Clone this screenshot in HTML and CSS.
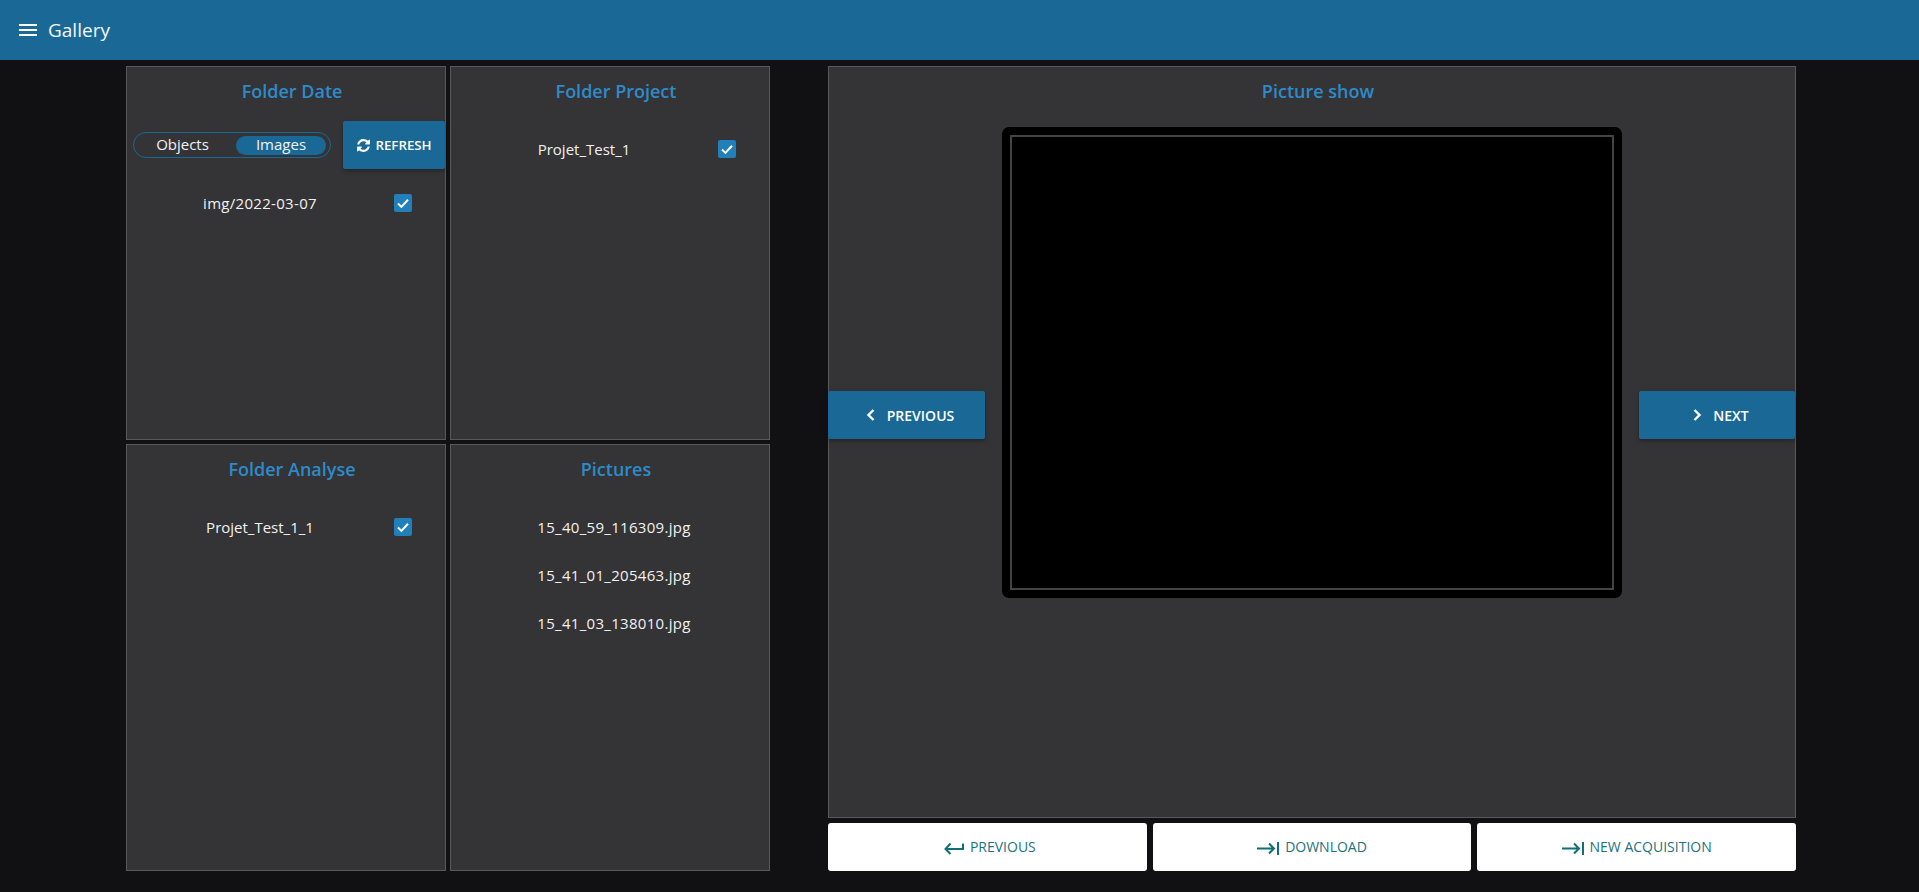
FILE: index.html
```html
<!DOCTYPE html>
<html>
	<head>
		<meta charset="utf-8">
		<title>Gallery</title>
		<link rel="stylesheet" href="styles.css">
	</head>
	<body>
		<div class="topbar">
			<svg class="menu-icon" viewBox="0 0 24 24"><path d="M3 18h18v-2H3v2zm0-5h18v-2H3v2zm0-7v2h18V6H3z"/></svg>
			<span class="topbar-title">Gallery</span>
		</div>
		<div class="main">
			<div class="folders">
				<div class="panel">
					<div class="panel-title">Folder Date</div>
					<div class="toolbar">
						<div class="switch">
							<span class="switch-off">Objects</span>
							<span class="switch-on">Images</span>
						</div>
						<div class="btn refresh">
							<svg class="refresh-icon" viewBox="0 0 1792 1792"><path d="M1639 1056q0 5-1 7-64 268-268 434.5t-478 166.5q-146 0-282.5-55t-243.5-157l-129 129q-19 19-45 19t-45-19-19-45v-448q0-26 19-45t45-19h448q26 0 45 19t19 45-19 45l-137 137q71 66 161 102t187 36q134 0 250-65t186-179q11-17 53-117 8-23 30-23h192q13 0 22.5 9.5t9.5 22.5zm25-800v448q0 26-19 45t-45 19h-448q-26 0-45-19t-19-45 19-45l138-138q-148-137-349-137-134 0-250 65t-186 179q-11 17-53 117-8 23-30 23h-199q-13 0-22.5-9.5t-9.5-22.5v-7q65-268 270-434.5t480-166.5q146 0 284 55.5t245 156.5l130-129q19-19 45-19t45 19 19 45z"/></svg>
							REFRESH
						</div>
					</div>
					<div class="row">
						<span class="row-label spaced">img/2022-03-07</span>
						<span class="check"><svg viewBox="0 0 18 18"><path d="M4 9.5l3.4 3.4L14 5.8"/></svg></span>
					</div>
				</div>
				<div class="panel">
					<div class="panel-title">Folder Project</div>
					<div class="row">
						<span class="row-label">Projet_Test_1</span>
						<span class="check"><svg viewBox="0 0 18 18"><path d="M4 9.5l3.4 3.4L14 5.8"/></svg></span>
					</div>
				</div>
				<div class="panel">
					<div class="panel-title">Folder Analyse</div>
					<div class="row">
						<span class="row-label">Projet_Test_1_1</span>
						<span class="check"><svg viewBox="0 0 18 18"><path d="M4 9.5l3.4 3.4L14 5.8"/></svg></span>
					</div>
				</div>
				<div class="panel">
					<div class="panel-title">Pictures</div>
					<div class="row row-file spaced">15_40_59_116309.jpg</div>
					<div class="row row-file spaced">15_41_01_205463.jpg</div>
					<div class="row row-file spaced">15_41_03_138010.jpg</div>
				</div>
			</div>
			<div class="viewer">
				<div class="panel show">
					<div class="panel-title">Picture show</div>
					<div class="stage">
						<div class="btn side prev">
							<svg class="chevron" viewBox="0 0 12 16"><path d="M8.5 3L3.5 8l5 5"/></svg>
							PREVIOUS
						</div>
						<div class="picture"><div class="picture-inner"></div></div>
						<div class="btn side next">
							<svg class="chevron" viewBox="0 0 12 16"><path d="M3.5 3l5 5-5 5"/></svg>
							NEXT
						</div>
					</div>
				</div>
				<div class="actions">
					<div class="action action-back">
						<svg class="action-icon" viewBox="0 0 20 13"><path d="M6.5 1.5L1.5 7l5 5M1.5 7H19V1.5"/></svg>
						PREVIOUS
					</div>
					<div class="action">
						<svg class="action-icon wide" viewBox="0 0 22 13"><path d="M0 6.5h17M12 1.5l5 5-5 5M21 0v13"/></svg>
						DOWNLOAD
					</div>
					<div class="action">
						<svg class="action-icon wide" viewBox="0 0 22 13"><path d="M0 6.5h17M12 1.5l5 5-5 5M21 0v13"/></svg>
						NEW ACQUISITION
					</div>
				</div>
			</div>
		</div>
	</body>
</html>
```

FILE: styles.css
```css
*{
	margin: 0;
	padding: 0;
	box-sizing: border-box;
}

body{
	background: #111113;
	color: #f2f2f2;
	font-family: "Open Sans", "Noto Sans", sans-serif;
	font-size: 15px;
	overflow: hidden;
}

.topbar{
	height: 60px;
	background: #1a6896;
	display: flex;
	align-items: center;
	padding-left: 16px;
	gap: 8px;
}
.menu-icon{
	width: 24px;
	height: 24px;
	fill: #fff;
}
.topbar-title{
	font-size: 19px;
	color: #f4f8fb;
}

.main{
	display: flex;
	padding: 6px 0 0 126px;
}

.folders{
	display: grid;
	grid-template-columns: 320px 320px;
	grid-template-rows: 374px 427px;
	gap: 4px;
	margin-right: 58px;
}

.panel{
	background: #343336;
	border: 1px solid #59595b;
}
.panel-title{
	height: 48px;
	line-height: 48px;
	padding-left: 12px;
	text-align: center;
	font-size: 18px;
	font-weight: 600;
	color: #2e8bc9;
}

.toolbar{
	display: flex;
	align-items: center;
	justify-content: space-between;
	margin: 6px 0 10px;
	padding-left: 6px;
}
.switch{
	width: 198px;
	height: 26px;
	border: 1px solid #1a6896;
	border-radius: 13px;
	display: flex;
	align-items: center;
	padding-right: 4px;
}
.switch-off{
	width: 102px;
	padding: 0 5px 2px 0;
	text-align: center;
}
.switch-on{
	width: 90px;
	height: 19px;
	line-height: 17px;
	border-radius: 10px;
	background: #1a6896;
	text-align: center;
}

.btn{
	background: #1a6896;
	color: #fff;
	border-radius: 2px;
	font-size: 14px;
	font-weight: 600;
	display: flex;
	align-items: center;
	justify-content: center;
	box-shadow: 0 2px 4px rgba(0,0,0,0.3);
}
.refresh{
	width: 102px;
	height: 48px;
	gap: 4px;
	font-size: 13.3px;
}
.refresh-icon{
	width: 15px;
	height: 15px;
	fill: #fff;
}

.row{
	height: 48px;
	display: flex;
	align-items: center;
}
.panel-title + .row{
	margin-top: 10px;
}
.row-label{
	width: 266px;
	text-align: center;
}
.row-file{
	justify-content: center;
	padding-left: 8px;
}
.spaced{
	letter-spacing: 0.3px;
}
.check{
	width: 18px;
	height: 18px;
	margin-left: 1px;
	border-radius: 2px;
	background: #2180b9;
}
.check svg{
	display: block;
	fill: none;
	stroke: #fff;
	stroke-width: 2;
}

.viewer{
	width: 968px;
	display: flex;
	flex-direction: column;
	gap: 5px;
}
.show{
	height: 752px;
}
.stage{
	display: flex;
	align-items: flex-start;
	gap: 17px;
	margin: 12px 0 0 -1px;
}
.side{
	height: 48px;
	margin-top: 264px;
	padding-left: 6px;
	gap: 10px;
}
.prev{
	width: 157px;
}
.next{
	width: 156px;
}
.chevron{
	width: 12px;
	height: 16px;
	fill: none;
	stroke: #fff;
	stroke-width: 2.4;
}
.picture{
	width: 620px;
	height: 471px;
	background: #000;
	border-radius: 7px;
	padding: 8px;
}
.picture-inner{
	height: 100%;
	border: 2px solid #444446;
}

.actions{
	display: grid;
	grid-template-columns: 1fr 1fr 1fr;
	gap: 6px;
}
.action{
	height: 48px;
	padding-bottom: 2px;
	background: #fff;
	border-radius: 3px;
	color: #1c7380;
	font-size: 14px;
	display: flex;
	align-items: center;
	justify-content: center;
	gap: 6px;
}
.action-back{
	padding-left: 5px;
}
.action-icon{
	width: 20px;
	height: 13px;
	fill: none;
	stroke: #0f6f78;
	stroke-width: 2;
	margin-top: 4px;
}
.action-icon.wide{
	width: 22px;
}
```
